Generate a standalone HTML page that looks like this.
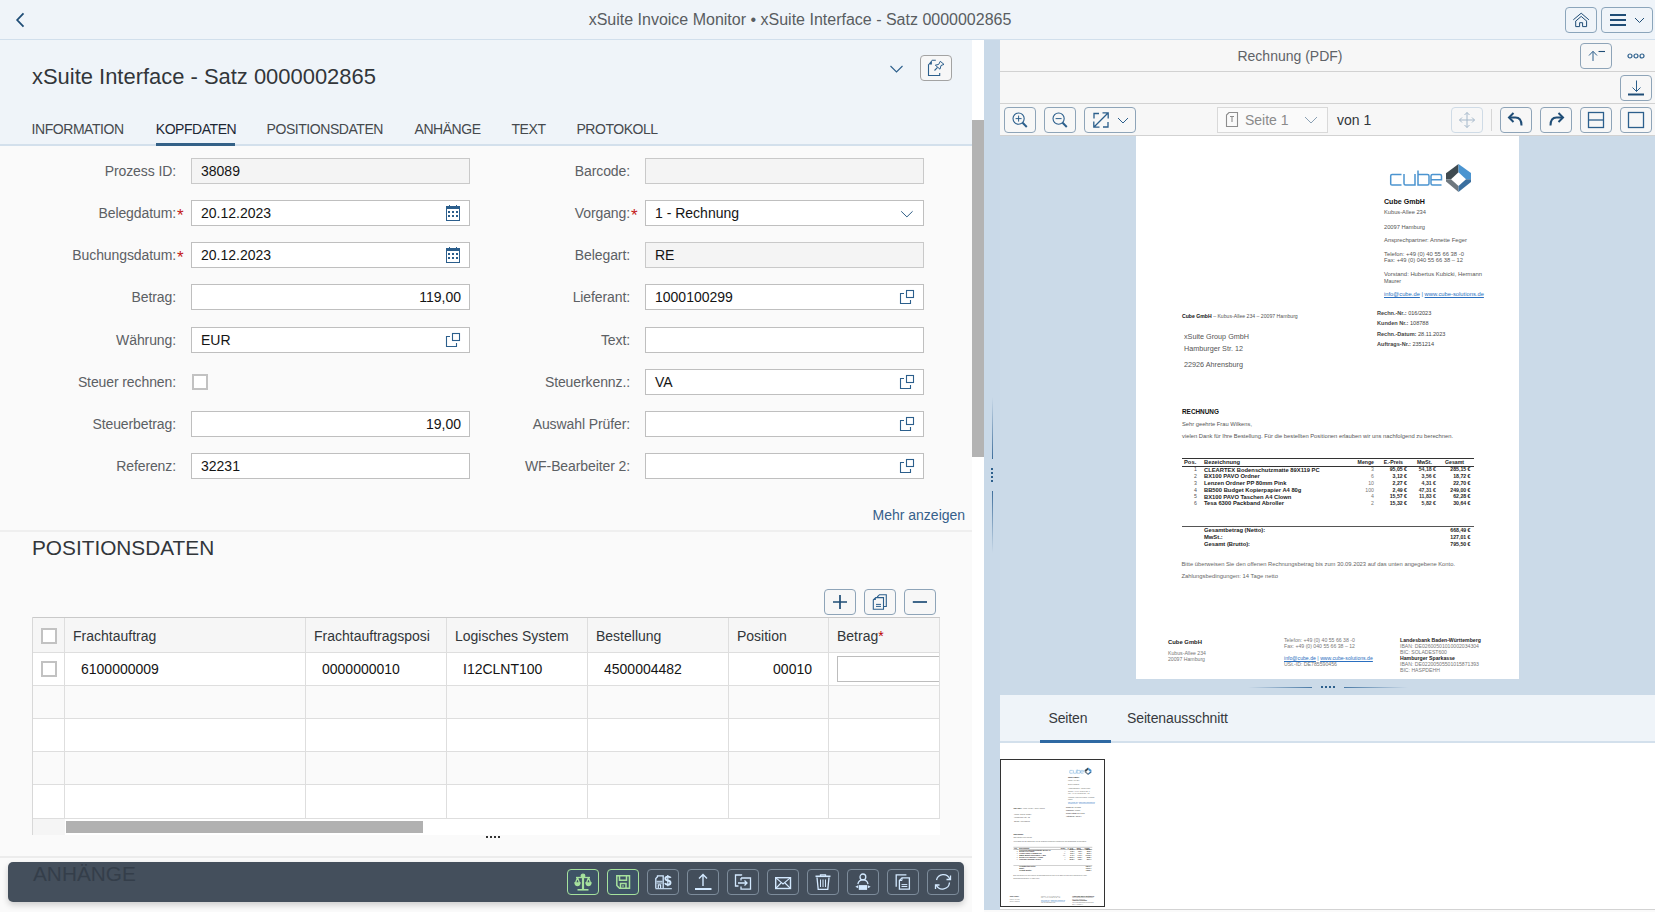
<!DOCTYPE html>
<html><head><meta charset="utf-8">
<style>
*{box-sizing:border-box;margin:0;padding:0}
html,body{width:1655px;height:912px;overflow:hidden;background:#fafafa;font-family:"Liberation Sans",sans-serif;color:#32363a;position:relative}
.abs{position:absolute}
.p{position:absolute;white-space:nowrap}
.lbl{font-size:14px;letter-spacing:-0.1px;color:#5c6064;text-align:right;line-height:16px;white-space:nowrap}
.req{font-size:17px;line-height:16px;color:#c41a1a}
.inp{height:26px;border:1px solid #bfbfbf;background:#fff;font-size:14px;color:#141414;line-height:24px;padding-left:9px;white-space:nowrap}
.ro{background:#f4f4f4;border-color:#c9c9c9}
.cb{width:16px;height:16px;border:2px solid #c2c2c2;background:#fff}
.tab{top:121px;font-size:14px;color:#45494d;line-height:16px;white-space:nowrap;letter-spacing:-0.45px}
.tbtn{height:26px;width:32px;border:1px solid #8ea4b8;border-radius:4px;background:#f7f7f7}
.fbtn{top:869px;height:26px;width:32px;border:1px solid #7d8c9b;border-radius:4px;background:#434e5b}
.th{font-size:14px;color:#32363a;line-height:16px;top:628px;white-space:nowrap}
.td{font-size:14px;color:#141414;line-height:16px;top:661px;white-space:nowrap}
</style></head>
<body>
<svg width="0" height="0" style="position:absolute">
 <defs>
  <symbol id="i-cal" viewBox="0 0 14 16"><rect x="0.5" y="1.5" width="13" height="14" fill="none" stroke="#2b5e8c" stroke-width="1"/><rect x="0" y="1" width="14" height="3" fill="#2b5e8c"/><rect x="3" y="0" width="1" height="2" fill="#2b5e8c"/><rect x="10" y="0" width="1" height="2" fill="#2b5e8c"/><g fill="#2b5e8c"><rect x="2" y="6" width="2" height="2"/><rect x="6" y="6" width="2" height="2"/><rect x="10" y="6" width="2" height="2"/><rect x="2" y="10" width="2" height="2"/><rect x="6" y="10" width="2" height="2"/><rect x="10" y="10" width="2" height="2"/></g></symbol>
  <symbol id="i-vh" viewBox="0 0 16 16"><path d="M5 4.5H1.5V14.5H11.5V11" fill="none" stroke="#2c5f8c" stroke-width="1.1"/><rect x="7.5" y="1.5" width="7" height="7" fill="none" stroke="#2c5f8c" stroke-width="1.1"/></symbol>
  <symbol id="i-dd" viewBox="0 0 16 10"><path d="M1.2 2.3L6.9 7.9L12.6 2.3" fill="none" stroke="#24557f" stroke-width="0.95"/></symbol>
 </defs>
</svg>
<!-- SHELL -->
<div class="abs" style="left:0;top:0;width:1655px;height:40px;background:#eff4f9"></div>
<div class="abs" style="left:0;top:39px;width:1655px;height:1px;background:#d1dfec"></div>
<svg class="abs" style="left:14px;top:11px" width="12" height="18" viewBox="0 0 12 18"><path d="M9.5 2.3L3.2 9L9.5 15.6" fill="none" stroke="#1f4d76" stroke-width="1.8"/></svg>
<div class="abs" style="left:0;top:11px;width:1600px;text-align:center;font-size:16px;line-height:18px;color:#595d61;white-space:nowrap">xSuite Invoice Monitor • xSuite Interface - Satz 0000002865</div>
<div class="abs" style="left:1565px;top:7px;width:32px;height:26px;border:1.5px solid #8ba5bb;border-radius:4px"></div>
<svg class="abs" style="left:1573px;top:12px" width="16" height="16" viewBox="0 0 16 16"><path d="M0.3 7.8L8.2 1.2L15.9 7.8M2.4 9.4L8.2 4.4L14 9.4" fill="none" stroke="#1f4d76" stroke-width="1"/><path d="M2.7 9.2V14.6H6.6V10.7H9.6V14.6H13.6V9.2" fill="none" stroke="#1f4d76" stroke-width="1"/></svg>
<div class="abs" style="left:1601px;top:7px;width:52px;height:26px;border:1.5px solid #8ba5bb;border-radius:4px"></div>
<div class="abs" style="left:1610px;top:14px;width:16px;height:2px;background:#1f4d76"></div>
<div class="abs" style="left:1610px;top:19px;width:16px;height:2px;background:#1f4d76"></div>
<div class="abs" style="left:1610px;top:24px;width:16px;height:2px;background:#1f4d76"></div>
<svg class="abs" style="left:1634px;top:17px" width="12" height="8" viewBox="0 0 12 8"><path d="M1 1L5.5 5.5L10 1" fill="none" stroke="#1f4d76" stroke-width="1"/></svg>

<!-- PAGE HEADER -->
<div class="abs" style="left:0;top:40px;width:972px;height:106px;background:#eff4f9"></div>
<div class="abs" style="left:0;top:144px;width:972px;height:2px;background:#d3e0ec"></div>
<div class="abs" style="left:32px;top:64.2px;font-size:21.95px;line-height:26px;color:#32363a;white-space:nowrap">xSuite Interface - Satz 0000002865</div>
<svg class="abs" style="left:889px;top:63px" width="16" height="12" viewBox="0 0 16 12"><path d="M1.5 3L7.5 9L13.5 3" fill="none" stroke="#2c5f8c" stroke-width="1.1"/></svg>
<div class="abs" style="left:920px;top:55px;width:32px;height:26px;border:1px solid #a3a3a3;border-radius:4px;background:#f7f7f7"></div>
<svg class="abs" style="left:927px;top:59px" width="18" height="18" viewBox="0 0 18 18"><path d="M4.9 1.3H8.8M1.5 5.3V16.5H12.7V14.1" fill="none" stroke="#2c5f8c" stroke-width="1.1"/><path d="M1.2 5.6L4.9 1.1V5.6Z" fill="#2c5f8c"/><path d="M13.3 2.3L17 5.4L14 6.5L13 10.2L8.3 6.2L11.7 5.4Z" fill="none" stroke="#2c5f8c" stroke-width="1" stroke-linejoin="round"/><path d="M10.5 8.3L7.5 11.5" stroke="#2c5f8c" stroke-width="1.1"/></svg>
<div class="abs tab" style="left:31.6px">INFORMATION</div>
<div class="abs tab" style="left:155.8px;color:#1d2733">KOPFDATEN</div>
<div class="abs tab" style="left:266.6px">POSITIONSDATEN</div>
<div class="abs tab" style="left:414.5px">ANHÄNGE</div>
<div class="abs tab" style="left:511.5px">TEXT</div>
<div class="abs tab" style="left:576.4px">PROTOKOLL</div>
<div class="abs" style="left:156px;top:143px;width:79px;height:3px;background:#346187"></div>
<div class="abs lbl" style="left:-24px;top:163px;width:200px">Prozess ID:</div>
<div class="abs inp ro" style="left:191px;top:158px;width:279px">38089</div>
<div class="abs lbl" style="left:-24px;top:205px;width:200px">Belegdatum:</div>
<div class="abs req" style="left:177px;top:208px">*</div>
<div class="abs inp " style="left:191px;top:200px;width:279px">20.12.2023</div>
<svg class="abs" style="left:446px;top:205px" width="14" height="16"><use href="#i-cal"/></svg>
<div class="abs lbl" style="left:-24px;top:247px;width:200px">Buchungsdatum:</div>
<div class="abs req" style="left:177px;top:250px">*</div>
<div class="abs inp " style="left:191px;top:242px;width:279px">20.12.2023</div>
<svg class="abs" style="left:446px;top:247px" width="14" height="16"><use href="#i-cal"/></svg>
<div class="abs lbl" style="left:-24px;top:289px;width:200px">Betrag:</div>
<div class="abs inp " style="left:191px;top:284px;width:279px;text-align:right;padding-right:8px">119,00</div>
<div class="abs lbl" style="left:-24px;top:332px;width:200px">Währung:</div>
<div class="abs inp " style="left:191px;top:327px;width:279px">EUR</div>
<svg class="abs" style="left:445px;top:332px" width="16" height="16"><use href="#i-vh"/></svg>
<div class="abs lbl" style="left:-24px;top:374px;width:200px">Steuer rechnen:</div>
<div class="abs cb" style="left:192px;top:374px"></div>
<div class="abs lbl" style="left:-24px;top:416px;width:200px">Steuerbetrag:</div>
<div class="abs inp " style="left:191px;top:411px;width:279px;text-align:right;padding-right:8px">19,00</div>
<div class="abs lbl" style="left:-24px;top:458px;width:200px">Referenz:</div>
<div class="abs inp " style="left:191px;top:453px;width:279px">32231</div>
<div class="abs lbl" style="left:430px;top:163px;width:200px">Barcode:</div>
<div class="abs inp ro" style="left:645px;top:158px;width:279px"></div>
<div class="abs lbl" style="left:430px;top:205px;width:200px">Vorgang:</div>
<div class="abs req" style="left:631px;top:208px">*</div>
<div class="abs inp " style="left:645px;top:200px;width:279px">1 - Rechnung</div>
<svg class="abs" style="left:900px;top:209px" width="16" height="10"><use href="#i-dd"/></svg>
<div class="abs lbl" style="left:430px;top:247px;width:200px">Belegart:</div>
<div class="abs inp ro" style="left:645px;top:242px;width:279px">RE</div>
<div class="abs lbl" style="left:430px;top:289px;width:200px">Lieferant:</div>
<div class="abs inp " style="left:645px;top:284px;width:279px">1000100299</div>
<svg class="abs" style="left:899px;top:289px" width="16" height="16"><use href="#i-vh"/></svg>
<div class="abs lbl" style="left:430px;top:332px;width:200px">Text:</div>
<div class="abs inp " style="left:645px;top:327px;width:279px"></div>
<div class="abs lbl" style="left:430px;top:374px;width:200px">Steuerkennz.:</div>
<div class="abs inp " style="left:645px;top:369px;width:279px">VA</div>
<svg class="abs" style="left:899px;top:374px" width="16" height="16"><use href="#i-vh"/></svg>
<div class="abs lbl" style="left:430px;top:416px;width:200px">Auswahl Prüfer:</div>
<div class="abs inp " style="left:645px;top:411px;width:279px"></div>
<svg class="abs" style="left:899px;top:416px" width="16" height="16"><use href="#i-vh"/></svg>
<div class="abs lbl" style="left:430px;top:458px;width:200px">WF-Bearbeiter 2:</div>
<div class="abs inp " style="left:645px;top:453px;width:279px"></div>
<svg class="abs" style="left:899px;top:458px" width="16" height="16"><use href="#i-vh"/></svg><div class="abs" style="left:872.5px;top:506.5px;font-size:14px;line-height:16px;color:#36608a;white-space:nowrap">Mehr anzeigen</div>
<div class="abs" style="left:0;top:530px;width:972px;height:2px;background:#efefef"></div>
<div class="abs" style="left:32px;top:536px;font-size:20.8px;line-height:24px;color:#32363a;white-space:nowrap">POSITIONSDATEN</div>

<!-- table toolbar -->
<div class="abs tbtn" style="left:824px;top:589px"></div>
<div class="abs tbtn" style="left:864px;top:589px"></div>
<div class="abs tbtn" style="left:904px;top:589px"></div>
<svg class="abs" style="left:830px;top:594px" width="20" height="16" viewBox="0 0 20 16"><path d="M10 1V15M3 8H17" stroke="#1f4d76" stroke-width="1.7"/></svg>
<svg class="abs" style="left:870px;top:594px" width="20" height="16" viewBox="0 0 20 16"><path d="M7.2 3L9.5 0.7H16.3V12.5H14" fill="none" stroke="#2c5f8c" stroke-width="1.1"/><path d="M3.3 6L5.8 3.6H13.5V15.3H3.3Z" fill="none" stroke="#2c5f8c" stroke-width="1.1"/><path d="M3.3 6L5.8 3.6V6Z" fill="#2c5f8c"/><path d="M6 10.4H11M6 12.4H11" stroke="#2c5f8c" stroke-width="1"/></svg>
<svg class="abs" style="left:910px;top:594px" width="20" height="16" viewBox="0 0 20 16"><path d="M2.8 8H17" stroke="#1f4d76" stroke-width="1.7"/></svg>

<!-- table -->
<div class="abs" style="left:32px;top:617px;width:908px;height:218px;background:#fff;border-left:1px solid #d8d8d8;overflow:hidden">
  <div class="abs" style="left:0;top:0;width:908px;height:1px;background:#c9c9c9"></div>
  <div class="abs" style="left:0;top:1px;width:908px;height:34px;background:#f6f6f6"></div>
  <div class="abs" style="left:0;top:68px;width:908px;height:33px;background:#fafafa"></div>
  <div class="abs" style="left:0;top:134px;width:908px;height:33px;background:#fafafa"></div>
  <!-- horizontal lines -->
  <div class="abs" style="left:0;top:35px;width:908px;height:1px;background:#dedede"></div>
  <div class="abs" style="left:0;top:68px;width:908px;height:1px;background:#dedede"></div>
  <div class="abs" style="left:0;top:101px;width:908px;height:1px;background:#dedede"></div>
  <div class="abs" style="left:0;top:134px;width:908px;height:1px;background:#dedede"></div>
  <div class="abs" style="left:0;top:167px;width:908px;height:1px;background:#dedede"></div>
  <div class="abs" style="left:0;top:201px;width:908px;height:1px;background:#dedede"></div>
  <!-- vertical lines -->
  <div class="abs" style="left:31px;top:1px;width:1px;height:200px;background:#dedede"></div>
  <div class="abs" style="left:272px;top:1px;width:1px;height:200px;background:#dedede"></div>
  <div class="abs" style="left:413px;top:1px;width:1px;height:200px;background:#dedede"></div>
  <div class="abs" style="left:554px;top:1px;width:1px;height:200px;background:#dedede"></div>
  <div class="abs" style="left:695px;top:1px;width:1px;height:200px;background:#dedede"></div>
  <div class="abs" style="left:795px;top:1px;width:1px;height:200px;background:#dedede"></div>
  <div class="abs" style="left:906px;top:1px;width:1px;height:200px;background:#dedede"></div>
  <!-- scroll -->
  <div class="abs" style="left:0;top:202px;width:32px;height:16px;background:#f5f5f5"></div>
  <div class="abs" style="left:33px;top:204px;width:357px;height:12px;background:#b1b1b1"></div>
</div>
<div class="abs cb" style="left:41px;top:628px"></div>
<div class="abs cb" style="left:41px;top:661px"></div>
<div class="abs th" style="left:73px">Frachtauftrag</div>
<div class="abs th" style="left:314px">Frachtauftragsposi</div>
<div class="abs th" style="left:455px">Logisches System</div>
<div class="abs th" style="left:596px">Bestellung</div>
<div class="abs th" style="left:737px">Position</div>
<div class="abs th" style="left:837px">Betrag<span style="color:#bb0000">*</span></div>
<div class="abs td" style="left:81px">6100000009</div>
<div class="abs td" style="left:322px">0000000010</div>
<div class="abs td" style="left:463px">I12CLNT100</div>
<div class="abs td" style="left:604px">4500004482</div>
<div class="abs td" style="left:712px;width:100px;text-align:right">00010</div>
<div class="abs" style="left:837px;top:656px;width:102px;height:26px;border:1px solid #bdbdbd;border-right:0;background:#fff"></div>
<div class="abs" style="left:940px;top:617px;width:32px;height:218px;background:#fafafa"></div>
<div class="abs" style="left:486px;top:836px;width:14px;height:2px;background:repeating-linear-gradient(90deg,#333 0 2px,transparent 2px 4px)"></div>

<div class="abs" style="left:0;top:856px;width:972px;height:2px;background:#ececec"></div>

<!-- footer toolbar -->
<div class="abs" style="left:8px;top:862px;width:956px;height:40px;background:#444f5c;border-radius:5px;box-shadow:0 3px 6px rgba(0,0,0,0.18)"></div>
<div class="abs" style="left:33px;top:862px;font-size:20.8px;line-height:24px;color:#343e4a;white-space:nowrap">ANHÄNGE</div>
<div class="abs fbtn" style="left:567px;border-color:#a6e29d;background:#3e5366"></div>
<div class="abs fbtn" style="left:607px;border-color:#a6e29d;background:#3e5366"></div>
<div class="abs fbtn" style="left:647px"></div>
<div class="abs fbtn" style="left:687px"></div>
<div class="abs fbtn" style="left:727px"></div>
<div class="abs fbtn" style="left:767px"></div>
<div class="abs fbtn" style="left:807px"></div>
<div class="abs fbtn" style="left:847px"></div>
<div class="abs fbtn" style="left:887px"></div>
<div class="abs fbtn" style="left:927px"></div>
<!-- scales -->
<svg class="abs" style="left:567px;top:869px" width="32" height="26" viewBox="0 0 32 26" fill="none" stroke="#a6e29d" stroke-width="1.3">
 <circle cx="16" cy="7" r="1.8" fill="#a6e29d"/><path d="M16 8V20.5" stroke-width="2.2"/><path d="M9 8.5H23"/>
 <path d="M10.5 8.5L8.5 14M10.5 8.5L12.5 14M21.5 8.5L19.5 14M21.5 8.5L23.5 14"/>
 <path d="M8 14H13Q12.5 16.5 10.5 16.5Q8.5 16.5 8 14Z" fill="#a6e29d"/><path d="M19 14H24Q23.5 16.5 21.5 16.5Q19.5 16.5 19 14Z" fill="#a6e29d"/>
 <path d="M10.5 20.8H21.5" stroke-width="1.6"/></svg>
<!-- save -->
<svg class="abs" style="left:607px;top:869px" width="32" height="26" viewBox="0 0 32 26" fill="none" stroke="#a6e29d" stroke-width="1.5">
 <path d="M9.8 6.8H22.5V19.3H12.5L9.8 16.5Z"/><path d="M12.5 6.8V11.2H19.5V6.8"/><path d="M13.5 19.3V14.5H19V19.3"/><path d="M16 16V18" stroke-width="1"/></svg>
<!-- building $ -->
<svg class="abs" style="left:647px;top:869px" width="32" height="26" viewBox="0 0 32 26" fill="none" stroke="#d3e9ff" stroke-width="1.3">
 <path d="M8.8 19.3V9.5L10.5 7.8V6.9H16.2V19.3"/><path d="M9.5 12.3H15.5M9.5 14H15.5" stroke-width="1"/><path d="M11.3 19.3V15.8H13.6V19.3" stroke-width="1.2"/><path d="M8.5 19.7H24.8" stroke-width="1.1"/>
 <path d="M23.7 8.9Q23.1 7.6 20.8 7.6Q18.4 7.6 18.4 9.5Q18.4 11.1 20.8 11.5Q23.5 11.9 23.5 13.8Q23.5 15.7 20.8 15.7Q18.6 15.7 18 14.2" stroke-width="1.9"/><path d="M20.8 6V17.3" stroke-width="1.2"/></svg>
<!-- upload -->
<svg class="abs" style="left:687px;top:869px" width="32" height="26" viewBox="0 0 32 26" fill="none" stroke="#d3e9ff" stroke-width="1.4">
 <path d="M16 5.5V17M12 9.5L16 5.5L20 9.5"/><path d="M8 20H24.5" stroke-width="2"/></svg>
<!-- transfer -->
<svg class="abs" style="left:727px;top:869px" width="32" height="26" viewBox="0 0 32 26" fill="none" stroke="#d3e9ff" stroke-width="1.3">
 <path d="M14.5 6.5V6H8.5V17H11.5"/><path d="M14 9H23.5V20.2H14V17.5"/><path d="M11 14H20M17.5 11.5L20 14L17.5 16.5"/><path d="M14 9V11.5" /></svg>
<!-- mail -->
<svg class="abs" style="left:767px;top:869px" width="32" height="26" viewBox="0 0 32 26" fill="none" stroke="#d3e9ff" stroke-width="1.4">
 <rect x="8.7" y="8.7" width="14.8" height="10.8"/><path d="M8.7 8.7L16 15L23.5 8.7M8.7 19.5L14 14M23.5 19.5L18 14" stroke-width="1.1"/></svg>
<!-- trash -->
<svg class="abs" style="left:807px;top:869px" width="32" height="26" viewBox="0 0 32 26" fill="none" stroke="#d3e9ff" stroke-width="1.3">
 <path d="M8.5 7.3H23.5" stroke-width="1.6"/><path d="M13.5 7V5.8H18.5V7"/><path d="M10 8.5L11.2 20.3H20.8L22 8.5"/><path d="M13.5 10.5V18M16 10.5V18M18.5 10.5V18" stroke-width="1"/></svg>
<!-- person laptop -->
<svg class="abs" style="left:847px;top:869px" width="32" height="26" viewBox="0 0 32 26" fill="none" stroke="#d3e9ff" stroke-width="1.3">
 <circle cx="15.9" cy="7.9" r="2.9"/><path d="M10.9 15.2A5.1 5 0 0 1 21 15.2"/><rect x="11.8" y="16.1" width="8.3" height="4.8" fill="#d3e9ff" stroke="none"/><path d="M8.3 17.8L11.2 16.3V19.3Z M23.7 17.8L20.8 16.3V19.3Z" fill="#d3e9ff" stroke="none"/></svg>
<!-- copy -->
<svg class="abs" style="left:887px;top:869px" width="32" height="26" viewBox="0 0 32 26" fill="none" stroke="#d3e9ff" stroke-width="1.3">
 <path d="M9.2 17.8V5.8H19.4"/><path d="M15 8.9H22.4V20.2H12.4V11.5Z"/><path d="M12.4 11.5H15V8.9" stroke-width="1"/><path d="M14.5 15.6H20.3M14.5 17.5H20.3" stroke-width="1"/></svg>
<!-- refresh -->
<svg class="abs" style="left:927px;top:869px" width="32" height="26" viewBox="0 0 32 26" fill="none" stroke="#d3e9ff" stroke-width="1.3">
 <path d="M9.5 11A7 7 0 0 1 22.8 10"/><path d="M22.5 13.5A7 7 0 0 1 9.2 16"/><path d="M23.5 6.5V10.5H19.5"/><path d="M8.5 20V16H12.5"/></svg>
<!-- vertical scrollbar + splitter -->
<div class="abs" style="left:972px;top:40px;width:12px;height:872px;background:#fff"></div>
<div class="abs" style="left:972px;top:120px;width:12px;height:337px;background:#b3b3b3"></div>
<div class="abs" style="left:984px;top:40px;width:16px;height:870px;background:#c9d9e8"></div>
<div class="abs" style="left:992px;top:397px;width:1px;height:62px;background:linear-gradient(#c9d9e8,#3f6f9c)"></div>
<div class="abs" style="left:992px;top:491px;width:1px;height:62px;background:linear-gradient(#3f6f9c,#c9d9e8)"></div>
<div class="abs" style="left:991px;top:468px;width:2px;height:14px;background:repeating-linear-gradient(#2c5f8c 0 2px,transparent 2px 4px)"></div>
<!-- RIGHT PANE -->
<div class="abs" style="left:1000px;top:40px;width:655px;height:96px;background:#f7f7f7"></div>
<div class="abs" style="left:1000px;top:71px;width:655px;height:1px;background:#d2d2d2"></div>
<div class="abs" style="left:1000px;top:103px;width:655px;height:1px;background:#d2d2d2"></div>
<div class="abs" style="left:1000px;top:135px;width:655px;height:1px;background:#d2d2d2"></div>
<div class="abs" style="left:1000px;top:47px;width:580px;text-align:center;font-size:14px;line-height:18px;color:#5f6367;white-space:nowrap">Rechnung (PDF)</div>
<div class="abs tbtn" style="left:1580px;top:43px;height:26px"></div>
<svg class="abs" style="left:1586px;top:47px" width="20" height="18" viewBox="0 0 20 18"><path d="M7 14V4.5M3 8.5L7 4.3L11 8.5" fill="none" stroke="#2c5f8c" stroke-width="1"/><path d="M12.5 4.5H19" stroke="#1f4d76" stroke-width="1.1"/></svg>
<svg class="abs" style="left:1627px;top:51px" width="20" height="10" viewBox="0 0 20 10"><circle cx="3" cy="5" r="2" fill="none" stroke="#2c5f8c" stroke-width="1.2"/><circle cx="9" cy="5" r="2" fill="none" stroke="#2c5f8c" stroke-width="1.2"/><circle cx="15" cy="5" r="2" fill="none" stroke="#2c5f8c" stroke-width="1.2"/></svg>
<div class="abs tbtn" style="left:1620px;top:75px"></div>
<svg class="abs" style="left:1626px;top:79px" width="20" height="18" viewBox="0 0 20 18"><path d="M10.5 1.5V12.5M6.5 8.5L10.5 12.5L14.5 8.5" fill="none" stroke="#2c5f8c" stroke-width="1"/><path d="M2 15.5H18" stroke="#1f4d76" stroke-width="2"/></svg>

<!-- toolbar row 3 -->
<div class="abs tbtn" style="left:1004px;top:107px"></div>
<svg class="abs" style="left:1010px;top:110px" width="20" height="20" viewBox="0 0 20 20"><circle cx="8.6" cy="8.6" r="5.6" fill="none" stroke="#2c5f8c" stroke-width="1.1"/><path d="M8.6 5.6V11.6M5.6 8.6H11.6" stroke="#2c5f8c" stroke-width="1"/><path d="M12.6 12.8L16.8 17" stroke="#2c5f8c" stroke-width="2"/></svg>
<div class="abs tbtn" style="left:1044px;top:107px"></div>
<svg class="abs" style="left:1050px;top:110px" width="20" height="20" viewBox="0 0 20 20"><circle cx="8.6" cy="8.6" r="5.6" fill="none" stroke="#2c5f8c" stroke-width="1.1"/><path d="M5.6 8.6H11.6" stroke="#2c5f8c" stroke-width="1"/><path d="M12.6 12.8L16.8 17" stroke="#2c5f8c" stroke-width="2"/></svg>
<div class="abs tbtn" style="left:1084px;top:107px;width:52px"></div>
<svg class="abs" style="left:1091px;top:111px" width="20" height="18" viewBox="0 0 20 18"><path d="M8 2.5H3V7.5M17 11V16H12" fill="none" stroke="#2c5f8c" stroke-width="1.3"/><path d="M3 16L17 2M11.5 1.8H17.2V7.5M2.8 10.5V16.2H8.5" fill="none" stroke="#2c5f8c" stroke-width="1.3"/></svg>
<svg class="abs" style="left:1117px;top:117px" width="12" height="8" viewBox="0 0 12 8"><path d="M1 1L6 6L11 1" fill="none" stroke="#2c5f8c" stroke-width="1"/></svg>

<div class="abs" style="left:1217px;top:107px;width:111px;height:26px;border:1px solid #d9d9d9;background:#fafafa"></div>
<svg class="abs" style="left:1225px;top:111px" width="14" height="18" viewBox="0 0 14 18"><path d="M4 1.5H12.5V15.5H1.5V4Z" fill="none" stroke="#8d8d8d" stroke-width="1.1"/><path d="M5 5.5H9M7 5.5V11" stroke="#8d8d8d" stroke-width="1.1"/></svg>
<div class="abs" style="left:1245px;top:112px;font-size:14px;line-height:16px;color:#8a8a8a;white-space:nowrap">Seite 1</div>
<svg class="abs" style="left:1304px;top:116px" width="14" height="9" viewBox="0 0 14 9"><path d="M1 1L7 7L13 1" fill="none" stroke="#8aa0b4" stroke-width="1"/></svg>
<div class="abs" style="left:1337px;top:112px;font-size:14px;line-height:16px;color:#32363a;white-space:nowrap">von 1</div>

<div class="abs tbtn" style="left:1451px;top:107px;border-color:#cfdbe6"></div>
<svg class="abs" style="left:1458px;top:111px" width="18" height="18" viewBox="0 0 18 18"><path d="M9 1.5V16.5M1.5 9H16.5M6.5 4L9 1.5L11.5 4M6.5 14L9 16.5L11.5 14M4 6.5L1.5 9L4 11.5M14 6.5L16.5 9L14 11.5" fill="none" stroke="#a5b8ca" stroke-width="1"/></svg>
<div class="abs" style="left:1491px;top:109px;width:1px;height:22px;background:#d6d6d6"></div>
<div class="abs tbtn" style="left:1500px;top:107px"></div>
<svg class="abs" style="left:1507px;top:111px" width="18" height="18" viewBox="0 0 18 18"><path d="M2.5 6.5H8.5C12.5 6.5 14.5 9 14.5 14.5" fill="none" stroke="#1f4d76" stroke-width="2"/><path d="M6.5 2L2 6.5L6.5 11" fill="none" stroke="#1f4d76" stroke-width="2"/></svg>
<div class="abs tbtn" style="left:1540px;top:107px"></div>
<svg class="abs" style="left:1547px;top:111px" width="18" height="18" viewBox="0 0 18 18"><path d="M15.5 6.5H9.5C5.5 6.5 3.5 9 3.5 14.5" fill="none" stroke="#1f4d76" stroke-width="2"/><path d="M11.5 2L16 6.5L11.5 11" fill="none" stroke="#1f4d76" stroke-width="2"/></svg>
<div class="abs tbtn" style="left:1580px;top:107px"></div>
<svg class="abs" style="left:1587px;top:111px" width="18" height="18" viewBox="0 0 18 18"><rect x="1.5" y="1.5" width="15" height="15" fill="none" stroke="#2c5f8c" stroke-width="1.3"/><path d="M1.5 9H16.5" stroke="#2c5f8c" stroke-width="1.3"/></svg>
<div class="abs tbtn" style="left:1620px;top:107px"></div>
<svg class="abs" style="left:1627px;top:111px" width="18" height="18" viewBox="0 0 18 18"><rect x="1.5" y="1.5" width="15" height="15" fill="none" stroke="#2c5f8c" stroke-width="1.3"/></svg>

<!-- PDF area -->
<div class="abs" style="left:1000px;top:136px;width:655px;height:559px;background:#cbdae8"></div>
<div class="abs" style="left:1136px;top:136px;width:383px;height:543px;background:#fff;overflow:hidden" id="pdfpage"><svg class="p" style="left:250px;top:26px" width="90" height="34" viewBox="0 0 90 34"><path d="M15.5 12.5H6.0Q4.7 12.5 4.7 14.0V22.0Q4.7 23.0 6.0 23.0H15.5M18.0 12.0V21.5Q18.0 23.0 19.5 23.0H29.0V12.0M32.0 8.5V23.0H41.5Q43.0 23.0 43.0 21.5V14.0Q43.0 12.5 41.5 12.5H32.0M55.5 23.0H46.5Q45.0 23.0 45.0 21.5V14.0Q45.0 12.5 46.5 12.5H54.0Q55.5 12.5 55.5 14.0V17.7H45.0" fill="none" stroke="#4b94d0" stroke-width="1.5"/><path d="M72.5 2.0 L72.5 10.2 L65.0 17.2 L60.0 17.2 L60.0 11.2Z" fill="#3f4a50"/><path d="M60.0 17.2 L65.0 17.2 L72.5 24.0 L72.5 30.0 L60.0 19.5Z" fill="#6e777e"/><path d="M72.5 2.0 L85.0 11.0 L85.0 17.3 L80.0 17.3 L72.5 10.2Z" fill="#4a94d0"/><path d="M85.0 17.3 L85.0 20.0 L72.5 30.0 L72.5 24.0 L80.0 17.3Z" fill="#3a6f9f"/></svg>
<div class="p" style="left:248.0px;top:61.6px;font-size:7.1px;line-height:8.88px;color:#111;font-weight:bold">Cube GmbH</div>
<div class="p" style="left:248.0px;top:73.4px;font-size:5.72px;line-height:7.15px;color:#555">Kubus-Allee 234</div>
<div class="p" style="left:248.0px;top:88.4px;font-size:5.72px;line-height:7.15px;color:#555">20097 Hamburg</div>
<div class="p" style="left:248.0px;top:101.4px;font-size:5.83px;line-height:7.29px;color:#555">Ansprechpartner: Annette Feger</div>
<div class="p" style="left:248.0px;top:115.3px;font-size:5.84px;line-height:7.30px;color:#555">Telefon: +49 (0) 40 55 66 38 -0</div>
<div class="p" style="left:248.0px;top:121.4px;font-size:5.74px;line-height:7.18px;color:#555">Fax: +49 (0) 040 55 66 38 – 12</div>
<div class="p" style="left:248.0px;top:135.3px;font-size:5.86px;line-height:7.33px;color:#555">Vorstand: Hubertus Kubicki, Hermann</div>
<div class="p" style="left:248.0px;top:141.6px;font-size:5.4px;line-height:6.75px;color:#555">Maurer</div>
<div class="p" style="left:248.0px;top:155.4px;font-size:5.8px;line-height:7.25px;color:#2a6fc0"><u>info@cube.de</u> | <u>www.cube-solutions.de</u></div>
<div class="p" style="left:46.0px;top:176.8px;font-size:5.15px;line-height:6.44px;color:#555"><b style="color:#111">Cube GmbH</b> – Kubus-Allee 234 – 20097 Hamburg</div>
<div class="p" style="left:241.0px;top:173.5px;font-size:5.55px;line-height:6.94px;color:#444"><b>Rechn.-Nr.:</b> 016/2023</div>
<div class="p" style="left:241.0px;top:183.5px;font-size:5.55px;line-height:6.94px;color:#444"><b>Kunden Nr.:</b> 108788</div>
<div class="p" style="left:241.0px;top:194.5px;font-size:5.55px;line-height:6.94px;color:#444"><b>Rechn.-Datum:</b> 28.11.2023</div>
<div class="p" style="left:241.0px;top:204.5px;font-size:5.55px;line-height:6.94px;color:#444"><b>Auftrags-Nr.:</b> 2351214</div>
<div class="p" style="left:48.0px;top:196.0px;font-size:7.22px;line-height:9.03px;color:#555">xSuite Group GmbH</div>
<div class="p" style="left:48.0px;top:208.0px;font-size:7.22px;line-height:9.03px;color:#555">Hamburger Str. 12</div>
<div class="p" style="left:48.0px;top:224.0px;font-size:7.22px;line-height:9.03px;color:#555">22926 Ahrensburg</div>
<div class="p" style="left:46.0px;top:271.5px;font-size:6.4px;line-height:8.00px;color:#111;font-weight:bold">RECHNUNG</div>
<div class="p" style="left:46.0px;top:284.9px;font-size:5.75px;line-height:7.19px;color:#555">Sehr geehrte Frau Wilkens,</div>
<div class="p" style="left:46.0px;top:296.9px;font-size:5.8px;line-height:7.25px;color:#555">vielen Dank für Ihre Bestellung. Für die bestellten Positionen erlauben wir uns nachfolgend zu berechnen.</div>
<div class="p" style="left:45.5px;top:322.0px;width:292.5px;height:1.3px;background:#333"></div>
<div class="p" style="left:45.5px;top:329.5px;width:292.5px;height:1px;background:#333"></div>
<div class="p" style="left:48.0px;top:323.0px;font-size:5.8px;line-height:7.25px;color:#222;font-weight:bold">Pos.</div>
<div class="p" style="left:68.0px;top:323.0px;font-size:5.8px;line-height:7.25px;color:#222;font-weight:bold">Bezeichnung</div>
<div class="p" style="right:145.0px;top:322.8px;font-size:5.2px;line-height:6.50px;color:#222;font-weight:bold">Menge</div>
<div class="p" style="right:116.0px;top:322.8px;font-size:5.2px;line-height:6.50px;color:#222;font-weight:bold">E.-Preis</div>
<div class="p" style="right:87.0px;top:322.8px;font-size:5.2px;line-height:6.50px;color:#222;font-weight:bold">MwSt.</div>
<div class="p" style="right:55.0px;top:322.8px;font-size:5.2px;line-height:6.50px;color:#222;font-weight:bold">Gesamt</div>
<div class="p" style="right:322.0px;top:330.4px;font-size:5.2px;line-height:6.50px;color:#555">1</div>
<div class="p" style="left:68.0px;top:330.6px;font-size:5.8px;line-height:7.25px;color:#222;font-weight:bold">CLEARTEX Bodenschutzmatte 89X119 PC</div>
<div class="p" style="right:145.0px;top:330.4px;font-size:5.2px;line-height:6.50px;color:#777">3</div>
<div class="p" style="right:112.0px;top:330.4px;font-size:5.2px;line-height:6.50px;color:#222;font-weight:bold">95,05 €</div>
<div class="p" style="right:83.0px;top:330.4px;font-size:5.2px;line-height:6.50px;color:#333;font-weight:bold">54,18 €</div>
<div class="p" style="right:48.5px;top:330.4px;font-size:5.2px;line-height:6.50px;color:#222;font-weight:bold">285,15 €</div>
<div class="p" style="right:322.0px;top:336.6px;font-size:5.2px;line-height:6.50px;color:#555">2</div>
<div class="p" style="left:68.0px;top:336.9px;font-size:5.8px;line-height:7.25px;color:#222;font-weight:bold">BX100 PAVO Ordner</div>
<div class="p" style="right:145.0px;top:336.6px;font-size:5.2px;line-height:6.50px;color:#777">6</div>
<div class="p" style="right:112.0px;top:336.6px;font-size:5.2px;line-height:6.50px;color:#222;font-weight:bold">3,12 €</div>
<div class="p" style="right:83.0px;top:336.6px;font-size:5.2px;line-height:6.50px;color:#333;font-weight:bold">3,56 €</div>
<div class="p" style="right:48.5px;top:336.6px;font-size:5.2px;line-height:6.50px;color:#222;font-weight:bold">18,72 €</div>
<div class="p" style="right:322.0px;top:343.8px;font-size:5.2px;line-height:6.50px;color:#555">3</div>
<div class="p" style="left:68.0px;top:344.0px;font-size:5.8px;line-height:7.25px;color:#222;font-weight:bold">Lenzen Ordner PP 80mm Pink</div>
<div class="p" style="right:145.0px;top:343.8px;font-size:5.2px;line-height:6.50px;color:#777">10</div>
<div class="p" style="right:112.0px;top:343.8px;font-size:5.2px;line-height:6.50px;color:#222;font-weight:bold">2,27 €</div>
<div class="p" style="right:83.0px;top:343.8px;font-size:5.2px;line-height:6.50px;color:#333;font-weight:bold">4,31 €</div>
<div class="p" style="right:48.5px;top:343.8px;font-size:5.2px;line-height:6.50px;color:#222;font-weight:bold">22,70 €</div>
<div class="p" style="right:322.0px;top:350.6px;font-size:5.2px;line-height:6.50px;color:#555">4</div>
<div class="p" style="left:68.0px;top:350.9px;font-size:5.8px;line-height:7.25px;color:#222;font-weight:bold">BB500 Budget Kopierpapier A4 80g</div>
<div class="p" style="right:145.0px;top:350.6px;font-size:5.2px;line-height:6.50px;color:#777">100</div>
<div class="p" style="right:112.0px;top:350.6px;font-size:5.2px;line-height:6.50px;color:#222;font-weight:bold">2,49 €</div>
<div class="p" style="right:83.0px;top:350.6px;font-size:5.2px;line-height:6.50px;color:#333;font-weight:bold">47,31 €</div>
<div class="p" style="right:48.5px;top:350.6px;font-size:5.2px;line-height:6.50px;color:#222;font-weight:bold">249,00 €</div>
<div class="p" style="right:322.0px;top:357.4px;font-size:5.2px;line-height:6.50px;color:#555">5</div>
<div class="p" style="left:68.0px;top:357.7px;font-size:5.8px;line-height:7.25px;color:#222;font-weight:bold">BX100 PAVO Taschen A4 Clown</div>
<div class="p" style="right:145.0px;top:357.4px;font-size:5.2px;line-height:6.50px;color:#777">4</div>
<div class="p" style="right:112.0px;top:357.4px;font-size:5.2px;line-height:6.50px;color:#222;font-weight:bold">15,57 €</div>
<div class="p" style="right:83.0px;top:357.4px;font-size:5.2px;line-height:6.50px;color:#333;font-weight:bold">11,83 €</div>
<div class="p" style="right:48.5px;top:357.4px;font-size:5.2px;line-height:6.50px;color:#222;font-weight:bold">62,28 €</div>
<div class="p" style="right:322.0px;top:363.8px;font-size:5.2px;line-height:6.50px;color:#555">6</div>
<div class="p" style="left:68.0px;top:364.0px;font-size:5.8px;line-height:7.25px;color:#222;font-weight:bold">Tesa 6300 Packband Abroller</div>
<div class="p" style="right:145.0px;top:363.8px;font-size:5.2px;line-height:6.50px;color:#777">2</div>
<div class="p" style="right:112.0px;top:363.8px;font-size:5.2px;line-height:6.50px;color:#222;font-weight:bold">15,32 €</div>
<div class="p" style="right:83.0px;top:363.8px;font-size:5.2px;line-height:6.50px;color:#333;font-weight:bold">5,82 €</div>
<div class="p" style="right:48.5px;top:363.8px;font-size:5.2px;line-height:6.50px;color:#222;font-weight:bold">30,64 €</div>
<div class="p" style="left:45.5px;top:390.0px;width:292.5px;height:1px;background:#555"></div>
<div class="p" style="left:68.0px;top:391.0px;font-size:5.8px;line-height:7.25px;color:#222;font-weight:bold">Gesamtbetrag (Netto):</div>
<div class="p" style="right:48.5px;top:390.8px;font-size:5.2px;line-height:6.50px;color:#222;font-weight:bold">668,49 €</div>
<div class="p" style="left:68.0px;top:398.0px;font-size:5.8px;line-height:7.25px;color:#222;font-weight:bold">MwSt.:</div>
<div class="p" style="right:48.5px;top:397.8px;font-size:5.2px;line-height:6.50px;color:#222;font-weight:bold">127,01 €</div>
<div class="p" style="left:68.0px;top:405.0px;font-size:5.8px;line-height:7.25px;color:#222;font-weight:bold">Gesamt (Brutto):</div>
<div class="p" style="right:48.5px;top:404.8px;font-size:5.2px;line-height:6.50px;color:#222;font-weight:bold">795,50 €</div>
<div class="p" style="left:45.5px;top:425.4px;font-size:5.81px;line-height:7.26px;color:#666">Bitte überweisen Sie den offenen Rechnungsbetrag bis zum 30.09.2023 auf das unten angegebene Konto.</div>
<div class="p" style="left:45.5px;top:436.8px;font-size:5.85px;line-height:7.31px;color:#666">Zahlungsbedingungen: 14 Tage netto</div>
<div class="p" style="left:32.0px;top:503.3px;font-size:5.88px;line-height:7.35px;color:#222;font-weight:bold">Cube GmbH</div>
<div class="p" style="left:32.0px;top:513.8px;font-size:5.18px;line-height:6.47px;color:#777">Kubus-Allee 234</div>
<div class="p" style="left:32.0px;top:519.8px;font-size:5.16px;line-height:6.45px;color:#777">20097 Hamburg</div>
<div class="p" style="left:148.0px;top:500.8px;font-size:5.18px;line-height:6.47px;color:#777">Telefon: +49 (0) 40 55 66 38 -0</div>
<div class="p" style="left:148.0px;top:506.8px;font-size:5.16px;line-height:6.45px;color:#777">Fax: +49 (0) 040 55 66 38 – 12</div>
<div class="p" style="left:148.0px;top:518.8px;font-size:5.17px;line-height:6.46px;color:#2a6fc0"><u>info@cube.de</u> | <u>www.cube-solutions.de</u></div>
<div class="p" style="left:148.0px;top:524.8px;font-size:5.18px;line-height:6.47px;color:#777">USt.-ID: DE785590456</div>
<div class="p" style="left:264.0px;top:500.8px;font-size:5.15px;line-height:6.44px;color:#222;font-weight:bold">Landesbank Baden-Württemberg</div>
<div class="p" style="left:264.0px;top:506.8px;font-size:5.13px;line-height:6.41px;color:#777">IBAN: DE02600501010002034304</div>
<div class="p" style="left:264.0px;top:512.8px;font-size:5.09px;line-height:6.36px;color:#777">BIC: SOLADEST600</div>
<div class="p" style="left:264.0px;top:518.8px;font-size:5.18px;line-height:6.47px;color:#222;font-weight:bold">Hamburger Sparkasse</div>
<div class="p" style="left:264.0px;top:524.8px;font-size:5.13px;line-height:6.41px;color:#777">IBAN: DE02200505501015871393</div>
<div class="p" style="left:264.0px;top:530.8px;font-size:5.14px;line-height:6.42px;color:#777">BIC: HASPDEHH</div></div>
<div class="abs" style="left:1321px;top:686px;width:15px;height:2px;background:repeating-linear-gradient(90deg,#2c5f8c 0 2px,transparent 2px 4px)"></div>
<div class="abs" style="left:1248px;top:687px;width:64px;height:1px;background:linear-gradient(90deg,#cbdae8,#4a7aa6)"></div>
<div class="abs" style="left:1344px;top:687px;width:64px;height:1px;background:linear-gradient(90deg,#4a7aa6,#cbdae8)"></div>

<!-- tabs panel -->
<div class="abs" style="left:1000px;top:695px;width:655px;height:48px;background:#eff4f9"></div>
<div class="abs" style="left:1000px;top:741px;width:655px;height:2px;background:#d3e0ec"></div>
<div class="abs" style="left:1040px;top:740px;width:71px;height:3px;background:#2e69a3"></div>
<div class="abs" style="left:1048.5px;top:710px;font-size:14px;line-height:16px;color:#36393d;white-space:nowrap;letter-spacing:-0.15px">Seiten</div>
<div class="abs" style="left:1127px;top:710px;font-size:14px;line-height:16px;color:#36393d;white-space:nowrap;letter-spacing:-0.12px">Seitenausschnitt</div>
<div class="abs" style="left:1000px;top:743px;width:655px;height:166px;background:#fff"></div>
<div class="abs" style="left:1000px;top:909px;width:655px;height:1px;background:#d3d3d3"></div>
<div class="abs" style="left:1000px;top:759px;width:105px;height:148px;border:1px solid #333;background:#fff;overflow:hidden" id="thumb"><div style="position:absolute;left:0;top:0;width:383px;height:543px;transform:scale(0.27);transform-origin:0 0"><svg class="p" style="left:250px;top:26px" width="90" height="34" viewBox="0 0 90 34"><path d="M15.5 12.5H6.0Q4.7 12.5 4.7 14.0V22.0Q4.7 23.0 6.0 23.0H15.5M18.0 12.0V21.5Q18.0 23.0 19.5 23.0H29.0V12.0M32.0 8.5V23.0H41.5Q43.0 23.0 43.0 21.5V14.0Q43.0 12.5 41.5 12.5H32.0M55.5 23.0H46.5Q45.0 23.0 45.0 21.5V14.0Q45.0 12.5 46.5 12.5H54.0Q55.5 12.5 55.5 14.0V17.7H45.0" fill="none" stroke="#4b94d0" stroke-width="1.5"/><path d="M72.5 2.0 L72.5 10.2 L65.0 17.2 L60.0 17.2 L60.0 11.2Z" fill="#3f4a50"/><path d="M60.0 17.2 L65.0 17.2 L72.5 24.0 L72.5 30.0 L60.0 19.5Z" fill="#6e777e"/><path d="M72.5 2.0 L85.0 11.0 L85.0 17.3 L80.0 17.3 L72.5 10.2Z" fill="#4a94d0"/><path d="M85.0 17.3 L85.0 20.0 L72.5 30.0 L72.5 24.0 L80.0 17.3Z" fill="#3a6f9f"/></svg>
<div class="p" style="left:248.0px;top:61.6px;font-size:7.1px;line-height:8.88px;color:#111;font-weight:bold">Cube GmbH</div>
<div class="p" style="left:248.0px;top:73.4px;font-size:5.72px;line-height:7.15px;color:#555">Kubus-Allee 234</div>
<div class="p" style="left:248.0px;top:88.4px;font-size:5.72px;line-height:7.15px;color:#555">20097 Hamburg</div>
<div class="p" style="left:248.0px;top:101.4px;font-size:5.83px;line-height:7.29px;color:#555">Ansprechpartner: Annette Feger</div>
<div class="p" style="left:248.0px;top:115.3px;font-size:5.84px;line-height:7.30px;color:#555">Telefon: +49 (0) 40 55 66 38 -0</div>
<div class="p" style="left:248.0px;top:121.4px;font-size:5.74px;line-height:7.18px;color:#555">Fax: +49 (0) 040 55 66 38 – 12</div>
<div class="p" style="left:248.0px;top:135.3px;font-size:5.86px;line-height:7.33px;color:#555">Vorstand: Hubertus Kubicki, Hermann</div>
<div class="p" style="left:248.0px;top:141.6px;font-size:5.4px;line-height:6.75px;color:#555">Maurer</div>
<div class="p" style="left:248.0px;top:155.4px;font-size:5.8px;line-height:7.25px;color:#2a6fc0"><u>info@cube.de</u> | <u>www.cube-solutions.de</u></div>
<div class="p" style="left:46.0px;top:176.8px;font-size:5.15px;line-height:6.44px;color:#555"><b style="color:#111">Cube GmbH</b> – Kubus-Allee 234 – 20097 Hamburg</div>
<div class="p" style="left:241.0px;top:173.5px;font-size:5.55px;line-height:6.94px;color:#444"><b>Rechn.-Nr.:</b> 016/2023</div>
<div class="p" style="left:241.0px;top:183.5px;font-size:5.55px;line-height:6.94px;color:#444"><b>Kunden Nr.:</b> 108788</div>
<div class="p" style="left:241.0px;top:194.5px;font-size:5.55px;line-height:6.94px;color:#444"><b>Rechn.-Datum:</b> 28.11.2023</div>
<div class="p" style="left:241.0px;top:204.5px;font-size:5.55px;line-height:6.94px;color:#444"><b>Auftrags-Nr.:</b> 2351214</div>
<div class="p" style="left:48.0px;top:196.0px;font-size:7.22px;line-height:9.03px;color:#555">xSuite Group GmbH</div>
<div class="p" style="left:48.0px;top:208.0px;font-size:7.22px;line-height:9.03px;color:#555">Hamburger Str. 12</div>
<div class="p" style="left:48.0px;top:224.0px;font-size:7.22px;line-height:9.03px;color:#555">22926 Ahrensburg</div>
<div class="p" style="left:46.0px;top:271.5px;font-size:6.4px;line-height:8.00px;color:#111;font-weight:bold">RECHNUNG</div>
<div class="p" style="left:46.0px;top:284.9px;font-size:5.75px;line-height:7.19px;color:#555">Sehr geehrte Frau Wilkens,</div>
<div class="p" style="left:46.0px;top:296.9px;font-size:5.8px;line-height:7.25px;color:#555">vielen Dank für Ihre Bestellung. Für die bestellten Positionen erlauben wir uns nachfolgend zu berechnen.</div>
<div class="p" style="left:45.5px;top:322.0px;width:292.5px;height:1.3px;background:#333"></div>
<div class="p" style="left:45.5px;top:329.5px;width:292.5px;height:1px;background:#333"></div>
<div class="p" style="left:48.0px;top:323.0px;font-size:5.8px;line-height:7.25px;color:#222;font-weight:bold">Pos.</div>
<div class="p" style="left:68.0px;top:323.0px;font-size:5.8px;line-height:7.25px;color:#222;font-weight:bold">Bezeichnung</div>
<div class="p" style="right:145.0px;top:322.8px;font-size:5.2px;line-height:6.50px;color:#222;font-weight:bold">Menge</div>
<div class="p" style="right:116.0px;top:322.8px;font-size:5.2px;line-height:6.50px;color:#222;font-weight:bold">E.-Preis</div>
<div class="p" style="right:87.0px;top:322.8px;font-size:5.2px;line-height:6.50px;color:#222;font-weight:bold">MwSt.</div>
<div class="p" style="right:55.0px;top:322.8px;font-size:5.2px;line-height:6.50px;color:#222;font-weight:bold">Gesamt</div>
<div class="p" style="right:322.0px;top:330.4px;font-size:5.2px;line-height:6.50px;color:#555">1</div>
<div class="p" style="left:68.0px;top:330.6px;font-size:5.8px;line-height:7.25px;color:#222;font-weight:bold">CLEARTEX Bodenschutzmatte 89X119 PC</div>
<div class="p" style="right:145.0px;top:330.4px;font-size:5.2px;line-height:6.50px;color:#777">3</div>
<div class="p" style="right:112.0px;top:330.4px;font-size:5.2px;line-height:6.50px;color:#222;font-weight:bold">95,05 €</div>
<div class="p" style="right:83.0px;top:330.4px;font-size:5.2px;line-height:6.50px;color:#333;font-weight:bold">54,18 €</div>
<div class="p" style="right:48.5px;top:330.4px;font-size:5.2px;line-height:6.50px;color:#222;font-weight:bold">285,15 €</div>
<div class="p" style="right:322.0px;top:336.6px;font-size:5.2px;line-height:6.50px;color:#555">2</div>
<div class="p" style="left:68.0px;top:336.9px;font-size:5.8px;line-height:7.25px;color:#222;font-weight:bold">BX100 PAVO Ordner</div>
<div class="p" style="right:145.0px;top:336.6px;font-size:5.2px;line-height:6.50px;color:#777">6</div>
<div class="p" style="right:112.0px;top:336.6px;font-size:5.2px;line-height:6.50px;color:#222;font-weight:bold">3,12 €</div>
<div class="p" style="right:83.0px;top:336.6px;font-size:5.2px;line-height:6.50px;color:#333;font-weight:bold">3,56 €</div>
<div class="p" style="right:48.5px;top:336.6px;font-size:5.2px;line-height:6.50px;color:#222;font-weight:bold">18,72 €</div>
<div class="p" style="right:322.0px;top:343.8px;font-size:5.2px;line-height:6.50px;color:#555">3</div>
<div class="p" style="left:68.0px;top:344.0px;font-size:5.8px;line-height:7.25px;color:#222;font-weight:bold">Lenzen Ordner PP 80mm Pink</div>
<div class="p" style="right:145.0px;top:343.8px;font-size:5.2px;line-height:6.50px;color:#777">10</div>
<div class="p" style="right:112.0px;top:343.8px;font-size:5.2px;line-height:6.50px;color:#222;font-weight:bold">2,27 €</div>
<div class="p" style="right:83.0px;top:343.8px;font-size:5.2px;line-height:6.50px;color:#333;font-weight:bold">4,31 €</div>
<div class="p" style="right:48.5px;top:343.8px;font-size:5.2px;line-height:6.50px;color:#222;font-weight:bold">22,70 €</div>
<div class="p" style="right:322.0px;top:350.6px;font-size:5.2px;line-height:6.50px;color:#555">4</div>
<div class="p" style="left:68.0px;top:350.9px;font-size:5.8px;line-height:7.25px;color:#222;font-weight:bold">BB500 Budget Kopierpapier A4 80g</div>
<div class="p" style="right:145.0px;top:350.6px;font-size:5.2px;line-height:6.50px;color:#777">100</div>
<div class="p" style="right:112.0px;top:350.6px;font-size:5.2px;line-height:6.50px;color:#222;font-weight:bold">2,49 €</div>
<div class="p" style="right:83.0px;top:350.6px;font-size:5.2px;line-height:6.50px;color:#333;font-weight:bold">47,31 €</div>
<div class="p" style="right:48.5px;top:350.6px;font-size:5.2px;line-height:6.50px;color:#222;font-weight:bold">249,00 €</div>
<div class="p" style="right:322.0px;top:357.4px;font-size:5.2px;line-height:6.50px;color:#555">5</div>
<div class="p" style="left:68.0px;top:357.7px;font-size:5.8px;line-height:7.25px;color:#222;font-weight:bold">BX100 PAVO Taschen A4 Clown</div>
<div class="p" style="right:145.0px;top:357.4px;font-size:5.2px;line-height:6.50px;color:#777">4</div>
<div class="p" style="right:112.0px;top:357.4px;font-size:5.2px;line-height:6.50px;color:#222;font-weight:bold">15,57 €</div>
<div class="p" style="right:83.0px;top:357.4px;font-size:5.2px;line-height:6.50px;color:#333;font-weight:bold">11,83 €</div>
<div class="p" style="right:48.5px;top:357.4px;font-size:5.2px;line-height:6.50px;color:#222;font-weight:bold">62,28 €</div>
<div class="p" style="right:322.0px;top:363.8px;font-size:5.2px;line-height:6.50px;color:#555">6</div>
<div class="p" style="left:68.0px;top:364.0px;font-size:5.8px;line-height:7.25px;color:#222;font-weight:bold">Tesa 6300 Packband Abroller</div>
<div class="p" style="right:145.0px;top:363.8px;font-size:5.2px;line-height:6.50px;color:#777">2</div>
<div class="p" style="right:112.0px;top:363.8px;font-size:5.2px;line-height:6.50px;color:#222;font-weight:bold">15,32 €</div>
<div class="p" style="right:83.0px;top:363.8px;font-size:5.2px;line-height:6.50px;color:#333;font-weight:bold">5,82 €</div>
<div class="p" style="right:48.5px;top:363.8px;font-size:5.2px;line-height:6.50px;color:#222;font-weight:bold">30,64 €</div>
<div class="p" style="left:45.5px;top:390.0px;width:292.5px;height:1px;background:#555"></div>
<div class="p" style="left:68.0px;top:391.0px;font-size:5.8px;line-height:7.25px;color:#222;font-weight:bold">Gesamtbetrag (Netto):</div>
<div class="p" style="right:48.5px;top:390.8px;font-size:5.2px;line-height:6.50px;color:#222;font-weight:bold">668,49 €</div>
<div class="p" style="left:68.0px;top:398.0px;font-size:5.8px;line-height:7.25px;color:#222;font-weight:bold">MwSt.:</div>
<div class="p" style="right:48.5px;top:397.8px;font-size:5.2px;line-height:6.50px;color:#222;font-weight:bold">127,01 €</div>
<div class="p" style="left:68.0px;top:405.0px;font-size:5.8px;line-height:7.25px;color:#222;font-weight:bold">Gesamt (Brutto):</div>
<div class="p" style="right:48.5px;top:404.8px;font-size:5.2px;line-height:6.50px;color:#222;font-weight:bold">795,50 €</div>
<div class="p" style="left:45.5px;top:425.4px;font-size:5.81px;line-height:7.26px;color:#666">Bitte überweisen Sie den offenen Rechnungsbetrag bis zum 30.09.2023 auf das unten angegebene Konto.</div>
<div class="p" style="left:45.5px;top:436.8px;font-size:5.85px;line-height:7.31px;color:#666">Zahlungsbedingungen: 14 Tage netto</div>
<div class="p" style="left:32.0px;top:503.3px;font-size:5.88px;line-height:7.35px;color:#222;font-weight:bold">Cube GmbH</div>
<div class="p" style="left:32.0px;top:513.8px;font-size:5.18px;line-height:6.47px;color:#777">Kubus-Allee 234</div>
<div class="p" style="left:32.0px;top:519.8px;font-size:5.16px;line-height:6.45px;color:#777">20097 Hamburg</div>
<div class="p" style="left:148.0px;top:500.8px;font-size:5.18px;line-height:6.47px;color:#777">Telefon: +49 (0) 40 55 66 38 -0</div>
<div class="p" style="left:148.0px;top:506.8px;font-size:5.16px;line-height:6.45px;color:#777">Fax: +49 (0) 040 55 66 38 – 12</div>
<div class="p" style="left:148.0px;top:518.8px;font-size:5.17px;line-height:6.46px;color:#2a6fc0"><u>info@cube.de</u> | <u>www.cube-solutions.de</u></div>
<div class="p" style="left:148.0px;top:524.8px;font-size:5.18px;line-height:6.47px;color:#777">USt.-ID: DE785590456</div>
<div class="p" style="left:264.0px;top:500.8px;font-size:5.15px;line-height:6.44px;color:#222;font-weight:bold">Landesbank Baden-Württemberg</div>
<div class="p" style="left:264.0px;top:506.8px;font-size:5.13px;line-height:6.41px;color:#777">IBAN: DE02600501010002034304</div>
<div class="p" style="left:264.0px;top:512.8px;font-size:5.09px;line-height:6.36px;color:#777">BIC: SOLADEST600</div>
<div class="p" style="left:264.0px;top:518.8px;font-size:5.18px;line-height:6.47px;color:#222;font-weight:bold">Hamburger Sparkasse</div>
<div class="p" style="left:264.0px;top:524.8px;font-size:5.13px;line-height:6.41px;color:#777">IBAN: DE02200505501015871393</div>
<div class="p" style="left:264.0px;top:530.8px;font-size:5.14px;line-height:6.42px;color:#777">BIC: HASPDEHH</div></div></div>

</body></html>
